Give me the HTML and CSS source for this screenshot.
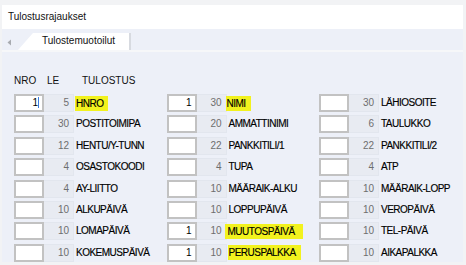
FILE: index.html
```html
<!DOCTYPE html>
<html>
<head>
<meta charset="utf-8">
<link rel="stylesheet" href="styles.css">
</head>
<body>
<div class="window">
  <div class="header">Tulostusrajaukset</div>
  <div class="tabstrip">
    <svg class="arrow" width="5" height="7" viewBox="0 0 5 7"><path d="M4 0.5 L0.5 3.5 L4 6.5 Z" fill="#a8abb0"/></svg>
    <div class="tab"><span>Tulostemuotoilut</span></div>
  </div>
  <div class="sep"></div>
  <div class="panel">
    <div class="colhead"><span class="h-nro">NRO</span><span class="h-le">LE</span><span class="h-tul">TULOSTUS</span></div>
    <div class="grid">
      <div class="cell"><div class="nro">1<i class="caret"></i></div><div class="le">5</div><div class="lbl"><span class="hl hl-a">HNRO</span></div></div>
      <div class="cell"><div class="nro">1</div><div class="le">30</div><div class="lbl"><span class="hl hl-b">NIMI</span></div></div>
      <div class="cell"><div class="nro"></div><div class="le">30</div><div class="lbl">LÄHIOSOITE</div></div>

      <div class="cell"><div class="nro"></div><div class="le">30</div><div class="lbl">POSTITOIMIPA</div></div>
      <div class="cell"><div class="nro"></div><div class="le">20</div><div class="lbl">AMMATTINIMI</div></div>
      <div class="cell"><div class="nro"></div><div class="le">6</div><div class="lbl">TAULUKKO</div></div>

      <div class="cell"><div class="nro"></div><div class="le">12</div><div class="lbl">HENTU/Y-TUNN</div></div>
      <div class="cell"><div class="nro"></div><div class="le">22</div><div class="lbl">PANKKITILI/1</div></div>
      <div class="cell"><div class="nro"></div><div class="le">22</div><div class="lbl">PANKKITILI/2</div></div>

      <div class="cell"><div class="nro"></div><div class="le">4</div><div class="lbl">OSASTOKOODI</div></div>
      <div class="cell"><div class="nro"></div><div class="le">4</div><div class="lbl">TUPA</div></div>
      <div class="cell"><div class="nro"></div><div class="le">4</div><div class="lbl">ATP</div></div>

      <div class="cell"><div class="nro"></div><div class="le">4</div><div class="lbl">AY-LIITTO</div></div>
      <div class="cell"><div class="nro"></div><div class="le">10</div><div class="lbl">MÄÄRAIK-ALKU</div></div>
      <div class="cell"><div class="nro"></div><div class="le">10</div><div class="lbl">MÄÄRAIK-LOPP</div></div>

      <div class="cell"><div class="nro"></div><div class="le">10</div><div class="lbl">ALKUPÄIVÄ</div></div>
      <div class="cell"><div class="nro"></div><div class="le">10</div><div class="lbl">LOPPUPÄIVÄ</div></div>
      <div class="cell"><div class="nro"></div><div class="le">10</div><div class="lbl">VEROPÄIVÄ</div></div>

      <div class="cell"><div class="nro"></div><div class="le">10</div><div class="lbl">LOMAPÄIVÄ</div></div>
      <div class="cell"><div class="nro">1</div><div class="le">10</div><div class="lbl"><span class="hl hl-c">MUUTOSPÄIVÄ</span></div></div>
      <div class="cell"><div class="nro"></div><div class="le">10</div><div class="lbl">TEL-PÄIVÄ</div></div>

      <div class="cell"><div class="nro"></div><div class="le">10</div><div class="lbl">KOKEMUSPÄIVÄ</div></div>
      <div class="cell"><div class="nro">1</div><div class="le">10</div><div class="lbl"><span class="hl hl-d">PERUSPALKKA</span></div></div>
      <div class="cell"><div class="nro"></div><div class="le">10</div><div class="lbl">AIKAPALKKA</div></div>
    </div>
  </div>
</div>
</body>
</html>
```

FILE: styles.css
```css
* { box-sizing: border-box; }
html, body { margin: 0; padding: 0; }
body {
  background: #f2f3f5;
  font-family: "Liberation Sans", Arial, sans-serif;
  font-size: 10px;
  color: #1a1a1a;
  width: 466px;
  height: 265px;
  overflow: hidden;
}
.window {
  margin: 5px 3px 0 2px;
}
.header {
  height: 24px;
  background: #ffffff;
  padding-left: 6px;
  line-height: 24px;
  font-size: 10px;
  color: #111;
}
.tabstrip {
  height: 21px;
  background: #edf0f8;
  display: flex;
  align-items: flex-end;
  position: relative;
}
.arrow {
  position: absolute;
  left: 5px;
  top: 10px;
}
.tab {
  margin-left: 16px;
  width: 113px;
  height: 17px;
  background: #ffffff;
  border-right: 2px solid #d7dae0;
  clip-path: polygon(15px 0, 100% 0, 100% 100%, 0 100%);
  padding-left: 24px;
  line-height: 16px;
  font-size: 10px;
  color: #111;
}
.sep {
  height: 2px;
  background: #f6f7f9;
}
.panel {
  height: 210px;
  background: #edf0f8;
  padding: 23px 0 0 12px;
}
.colhead {
  height: 12px;
  line-height: 12px;
  display: flex;
  font-size: 10px;
  color: #111;
}
.h-nro { width: 33px; }
.h-le { width: 35px; }
.grid {
  margin-top: 7px;
  display: grid;
  grid-template-columns: 152.5px 152.5px 140px;
  grid-auto-rows: 18px;
  row-gap: 3.4px;
}
.cell {
  display: flex;
  align-items: center;
  height: 18px;
}
.nro {
  width: 30px;
  height: 18px;
  background: #ffffff;
  border: 2px solid #c2c2c2;
  text-align: right;
  padding-right: 3px;
  line-height: 14px;
  font-size: 10px;
  color: #000;
  position: relative;
}
.caret {
  display: inline-block;
  width: 1px;
  height: 11px;
  background: #3b7de0;
  vertical-align: -2px;
  margin-left: 0;
}
.le {
  width: 30px;
  height: 18px;
  background: #e8ebf2;
  border: 1px solid #e2e6ee;
  border-left: none;
  text-align: right;
  padding-right: 4px;
  line-height: 16px;
  font-size: 10px;
  color: #6e6e6e;
}
.lbl {
  padding-left: 2px;
  font-size: 10px;
  letter-spacing: -0.5px;
  color: #000;
  -webkit-text-stroke: 0.15px #000;
  white-space: nowrap;
  line-height: 14px;
}
.hl {
  background: #f2f21e;
  display: inline-block;
  line-height: 15px;
}
.hl-a { padding: 0 5px 0 1px; margin-left: -1px; }
.hl-b { padding: 0 5px 0 1px; margin-left: -3px; }
.hl-c { padding: 0 8px 0 3px; margin-left: -4px; }
.hl-d { padding: 0 5px 0 1px; margin-left: -1px; }
```
